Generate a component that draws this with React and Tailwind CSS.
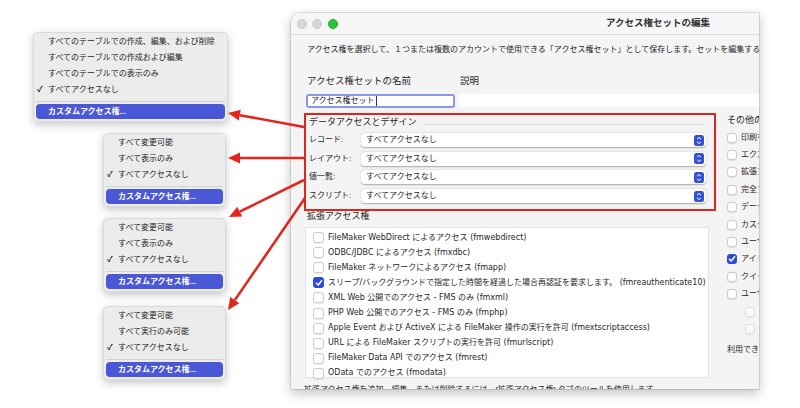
import React from "react";

const FONT = "font-['Liberation_Sans','Noto_Sans_CJK_JP',sans-serif]";
const LIST_FONT = "font-['DejaVu_Sans','Noto_Sans_CJK_JP',sans-serif]";

const arrows = [
  [304, 127, 228, 113],
  [304, 158, 228, 158],
  [304, 180, 229, 217],
  [305, 198, 228, 310],
];

const extItems = [
  ["FileMaker WebDirect によるアクセス (fmwebdirect)", false],
  ["ODBC/JDBC によるアクセス (fmxdbc)", false],
  ["FileMaker ネットワークによるアクセス (fmapp)", false],
  ["スリープ/バックグラウンドで指定した時間を経過した場合再認証を要求します。 (fmreauthenticate10)", true],
  ["XML Web 公開でのアクセス - FMS のみ (fmxml)", false],
  ["PHP Web 公開でのアクセス - FMS のみ (fmphp)", false],
  ["Apple Event および ActiveX による FileMaker 操作の実行を許可 (fmextscriptaccess)", false],
  ["URL による FileMaker スクリプトの実行を許可 (fmurlscript)", false],
  ["FileMaker Data API でのアクセス (fmrest)", false],
  ["OData でのアクセス (fmodata)", false],
];

const otherItems = [
  ["印刷を許可", false],
  ["エクスポートを許可", false],
  ["拡張アクセス権の管理", false],
  ["完全アクセス権なしで編集を許可", false],
  ["データ入力の警告の上書きを許可", false],
  ["カスタムアプリのアップロードを許可", false],
  ["ユーザによるレイアウトの変更を許可", false],
  ["アイドル時に FileMaker Server から切断", true],
  ["クイック検索を許可", false],
  ["ユーザによるパスワードの変更を許可", false],
];

const dataRows = ["レコード:", "レイアウト:", "値一覧:", "スクリプト:"];

function Arrow({ x1, y1, x2, y2 }) {
  const dx = x2 - x1;
  const dy = y2 - y1;
  const len = Math.hypot(dx, dy);
  const ux = dx / len;
  const uy = dy / len;
  const bx = x2 - ux * 12;
  const by = y2 - uy * 12;
  const nx = -uy * 5.5;
  const ny = ux * 5.5;
  return (
    <g>
      <line x1={x1} y1={y1} x2={bx} y2={by} stroke="#e3261c" strokeWidth="2.6" />
      <polygon
        points={`${x2},${y2} ${bx + nx},${by + ny} ${bx - nx},${by - ny}`}
        fill="#e3261c"
      />
    </g>
  );
}

function Menu({ items, width, className = "" }) {
  return (
    <div
      className={`rounded-[5px] bg-[#ececec] border border-[#d9d9d9] shadow-[0_3px_8px_rgba(0,0,0,0.22)] pt-[1px] pb-[2px] text-[8px] text-[#262626] ${width} ${className}`}
    >
      {items.map((label, i) => (
        <div key={i} className="h-[16px] flex items-center">
          <span className="w-[14px] pl-[3px] text-[8px] leading-none font-bold">
            {i === items.length - 1 ? "✓" : ""}
          </span>
          <span className="whitespace-nowrap">{label}</span>
        </div>
      ))}
      <div className="h-[6px] flex items-center px-[2px]">
        <div className="h-px w-full bg-[#d3d3d3]" />
      </div>
      <div className="mx-[2px] h-[15px] rounded-[4px] bg-[#4a58d8] text-white pl-[12px] flex items-center font-semibold">
        カスタムアクセス権...
      </div>
    </div>
  );
}

function Box({ on, size = "w-[10px] h-[10px]", dim }) {
  if (on) {
    return (
      <span className={`${size} rounded-[3px] bg-[#2d4ad8] flex items-center justify-center shrink-0`}>
        <svg width="8" height="8" viewBox="0 0 8 8">
          <path
            d="M1.4 4.2 L3.2 6 L6.6 1.7"
            fill="none"
            stroke="white"
            strokeWidth="1.5"
            strokeLinecap="round"
            strokeLinejoin="round"
          />
        </svg>
      </span>
    );
  }
  return (
    <span
      className={`${size} rounded-[3px] bg-white border border-[#cdcdcd] shadow-[0_0.5px_1px_rgba(0,0,0,0.08)] shrink-0 ${dim ? "opacity-50" : ""}`}
    />
  );
}

function Popup({ label }) {
  return (
    <div className="h-[18.6px] flex items-center">
      <div className="w-[52px] text-[8px] whitespace-nowrap">{label}</div>
      <div className="h-[14px] w-[345px] bg-white rounded-[4px] shadow-[0_0.5px_1.5px_rgba(0,0,0,0.3)] flex items-center pl-[5px] pr-[2px]">
        <span className="flex-1 text-[8px]">すべてアクセスなし</span>
        <svg width="10" height="11" viewBox="0 0 10 11">
          <rect x="0" y="0" width="10" height="11" rx="2.5" fill="#3350d6" />
          <path d="M3 4.2 L5 2.4 L7 4.2" fill="none" stroke="white" strokeWidth="1" />
          <path d="M3 6.8 L5 8.6 L7 6.8" fill="none" stroke="white" strokeWidth="1" />
        </svg>
      </div>
    </div>
  );
}

const App = () => {
  return (
    <div className={`relative w-[800px] h-[408px] bg-white overflow-hidden flex items-start text-[#262626] ${FONT}`}>
      {/* Menus */}
      <div className="w-[291px] flex flex-col pt-[32px] pl-[33px]">
        <Menu
          width="w-[195px]"
          items={[
            "すべてのテーブルでの作成、編集、および削除",
            "すべてのテーブルでの作成および編集",
            "すべてのテーブルでの表示のみ",
            "すべてアクセスなし",
          ]}
        />
        <Menu
          width="w-[123px]"
          className="ml-[70px] mt-[11px]"
          items={["すべて変更可能", "すべて表示のみ", "すべてアクセスなし"]}
        />
        <Menu
          width="w-[123px]"
          className="ml-[70px] mt-[11px]"
          items={["すべて変更可能", "すべて表示のみ", "すべてアクセスなし"]}
        />
        <Menu
          width="w-[123px]"
          className="ml-[70px] mt-[14px]"
          items={["すべて変更可能", "すべて実行のみ可能", "すべてアクセスなし"]}
        />
      </div>

      {/* Window */}
      <div className="mt-[13px] w-[468px] h-[376px] overflow-hidden rounded-tl-[9px] bg-[#f4f4f4] shadow-[0_0_0_1px_rgba(0,0,0,0.1),0_4px_12px_rgba(0,0,0,0.25)]">
        <div className="h-[22px] border-b border-[#dedede] bg-[#f6f6f6] flex items-center pl-[6px]">
          <span className="w-[10px] h-[10px] rounded-full bg-[#d6d6d6] border border-[#c8c8c8]" />
          <span className="w-[10px] h-[10px] rounded-full bg-[#d6d6d6] border border-[#c8c8c8] ml-[5px]" />
          <span className="w-[10px] h-[10px] rounded-full bg-[#2cc23e] border border-[#22a833] ml-[6px]" />
          <span className="ml-[268px] text-[9.5px] font-semibold text-[#333] whitespace-nowrap">
            アクセス権セットの編集
          </span>
        </div>

        <div className="mt-[10px] h-[10px] pl-[16px] text-[8px] leading-[10px] whitespace-nowrap">
          アクセス権を選択して、１つまたは複数のアカウントで使用できる「アクセス権セット」として保存します。セットを編集するには、
        </div>

        <div className="mt-[20px] h-[12px] flex items-center text-[9.5px]">
          <div className="w-[169px] pl-[16px] whitespace-nowrap">アクセス権セットの名前</div>
          <div>説明</div>
        </div>

        <div className="mt-[7px] h-[14px] flex">
          <div className="ml-[15px] w-[149px] h-[14px] bg-white rounded-[3px] border-2 border-[#8a98ea] flex items-center pl-[3px] text-[8px]">
            アクセス権セット
            <span className="w-px h-[10px] bg-[#1d2f9a] ml-px" />
          </div>
          <div className="ml-[4px] flex-1 h-[13px] bg-white" />
        </div>

        <div className="mt-[5px] flex items-start">
          {/* Left column */}
          <div className="ml-[13px] w-[412px] shrink-0">
            <div className="h-[98px] border-2 border-[#e0251e] pl-[3px] pr-[8px]">
              <div className="h-[16px] flex items-center">
                <span className="text-[9px] whitespace-nowrap">データアクセスとデザイン</span>
                <div className="flex-1 h-px bg-[#dadada] ml-[8px] mr-[2px] mt-[3px]" />
              </div>
              {dataRows.map((r) => (
                <Popup key={r} label={r} />
              ))}
            </div>

            <div className="h-[12px] flex items-center pl-[3px] text-[9px]">拡張アクセス権</div>

            <div className="mt-[4px] ml-[1px] w-[404px] h-[151px] bg-white border border-[#e3e3e3] pt-[2px]">
              {extItems.map(([t, on]) => (
                <div key={t} className="h-[15.1px] flex items-center pl-[7px]">
                  <Box on={on} size="w-[11px] h-[11px]" />
                  <span className={`ml-[4px] text-[8px] whitespace-nowrap ${LIST_FONT}`}>{t}</span>
                </div>
              ))}
            </div>

            <div className="mt-[6px] h-[12px] text-[8px] leading-[12px] whitespace-nowrap">
              拡張アクセス権を追加、編集、または削除するには、[拡張アクセス権] タブのツールを使用します。
            </div>
          </div>

          {/* Right column */}
          <div className="ml-[11px] flex-1 min-w-0">
            <div className="h-[16px] flex items-center text-[9px] whitespace-nowrap">その他のアクセス権</div>
            {otherItems.map(([t, on]) => (
              <div key={t} className="h-[17.4px] flex items-center">
                <Box on={on} />
                <span className="ml-[4px] text-[8px] whitespace-nowrap">{t}</span>
              </div>
            ))}
            {["変更の間隔", "パスワードの最小文字数"].map((t) => (
              <div key={t} className="h-[17.4px] flex items-center pl-[18px]">
                <Box dim />
                <span className="ml-[4px] text-[8px] whitespace-nowrap text-[#b0b0b0]">{t}</span>
              </div>
            ))}
            <div className="mt-[6px] h-[12px] flex items-center text-[8px] whitespace-nowrap">
              利用できるメニューコマンド:
            </div>
          </div>
        </div>
      </div>

      {/* Annotation arrows */}
      <svg className="absolute inset-0 pointer-events-none" width="800" height="408">
        {arrows.map(([x1, y1, x2, y2], i) => (
          <Arrow key={i} x1={x1} y1={y1} x2={x2} y2={y2} />
        ))}
      </svg>
    </div>
  );
};

export default App;
